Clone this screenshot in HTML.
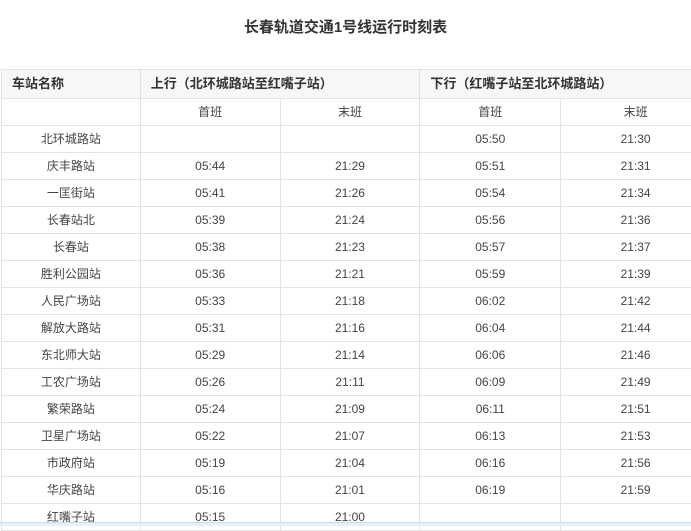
<!DOCTYPE html>
<html><head><meta charset="utf-8"><style>
body{margin:0;width:691px;height:525px;overflow:hidden;background:#fff;font-family:"Liberation Sans","Noto Sans CJK SC",sans-serif;position:relative}
h1{position:absolute;top:18px;left:0;width:691px;margin:0;text-align:center;font-size:15px;font-weight:bold;color:#333;line-height:20px}
table{position:absolute;top:69px;left:1px;border-collapse:collapse;width:710px;font-size:12px;color:#444}
td{border:1px solid #e3e3e3;height:26px;padding:0;text-align:center;line-height:26px}
tr.h td{background:#f7f7f7;height:28px;font-weight:bold;color:#333;text-align:left;padding-left:10px;font-size:13px}
.strip{position:absolute;left:0;top:522px;width:691px;height:3px;background:#e8f1fb;border-top:1px solid #c6dbf0}
</style></head><body>
<h1>长春轨道交通1号线运行时刻表</h1>
<table>
<colgroup><col style="width:139px"><col style="width:140px"><col style="width:140px"><col style="width:141px"><col style="width:150px"></colgroup>
<tr class="h"><td>车站名称</td><td colspan="2">上行（北环城路站至红嘴子站）</td><td colspan="2">下行（红嘴子站至北环城路站）</td></tr>
<tr><td></td><td>首班</td><td>末班</td><td>首班</td><td>末班</td></tr>
<tr><td>北环城路站</td><td></td><td></td><td>05:50</td><td>21:30</td></tr>
<tr><td>庆丰路站</td><td>05:44</td><td>21:29</td><td>05:51</td><td>21:31</td></tr>
<tr><td>一匡街站</td><td>05:41</td><td>21:26</td><td>05:54</td><td>21:34</td></tr>
<tr><td>长春站北</td><td>05:39</td><td>21:24</td><td>05:56</td><td>21:36</td></tr>
<tr><td>长春站</td><td>05:38</td><td>21:23</td><td>05:57</td><td>21:37</td></tr>
<tr><td>胜利公园站</td><td>05:36</td><td>21:21</td><td>05:59</td><td>21:39</td></tr>
<tr><td>人民广场站</td><td>05:33</td><td>21:18</td><td>06:02</td><td>21:42</td></tr>
<tr><td>解放大路站</td><td>05:31</td><td>21:16</td><td>06:04</td><td>21:44</td></tr>
<tr><td>东北师大站</td><td>05:29</td><td>21:14</td><td>06:06</td><td>21:46</td></tr>
<tr><td>工农广场站</td><td>05:26</td><td>21:11</td><td>06:09</td><td>21:49</td></tr>
<tr><td>繁荣路站</td><td>05:24</td><td>21:09</td><td>06:11</td><td>21:51</td></tr>
<tr><td>卫星广场站</td><td>05:22</td><td>21:07</td><td>06:13</td><td>21:53</td></tr>
<tr><td>市政府站</td><td>05:19</td><td>21:04</td><td>06:16</td><td>21:56</td></tr>
<tr><td>华庆路站</td><td>05:16</td><td>21:01</td><td>06:19</td><td>21:59</td></tr>
<tr><td>红嘴子站</td><td>05:15</td><td>21:00</td><td></td><td></td></tr>
</table>
<div class="strip"></div>
</body></html>
